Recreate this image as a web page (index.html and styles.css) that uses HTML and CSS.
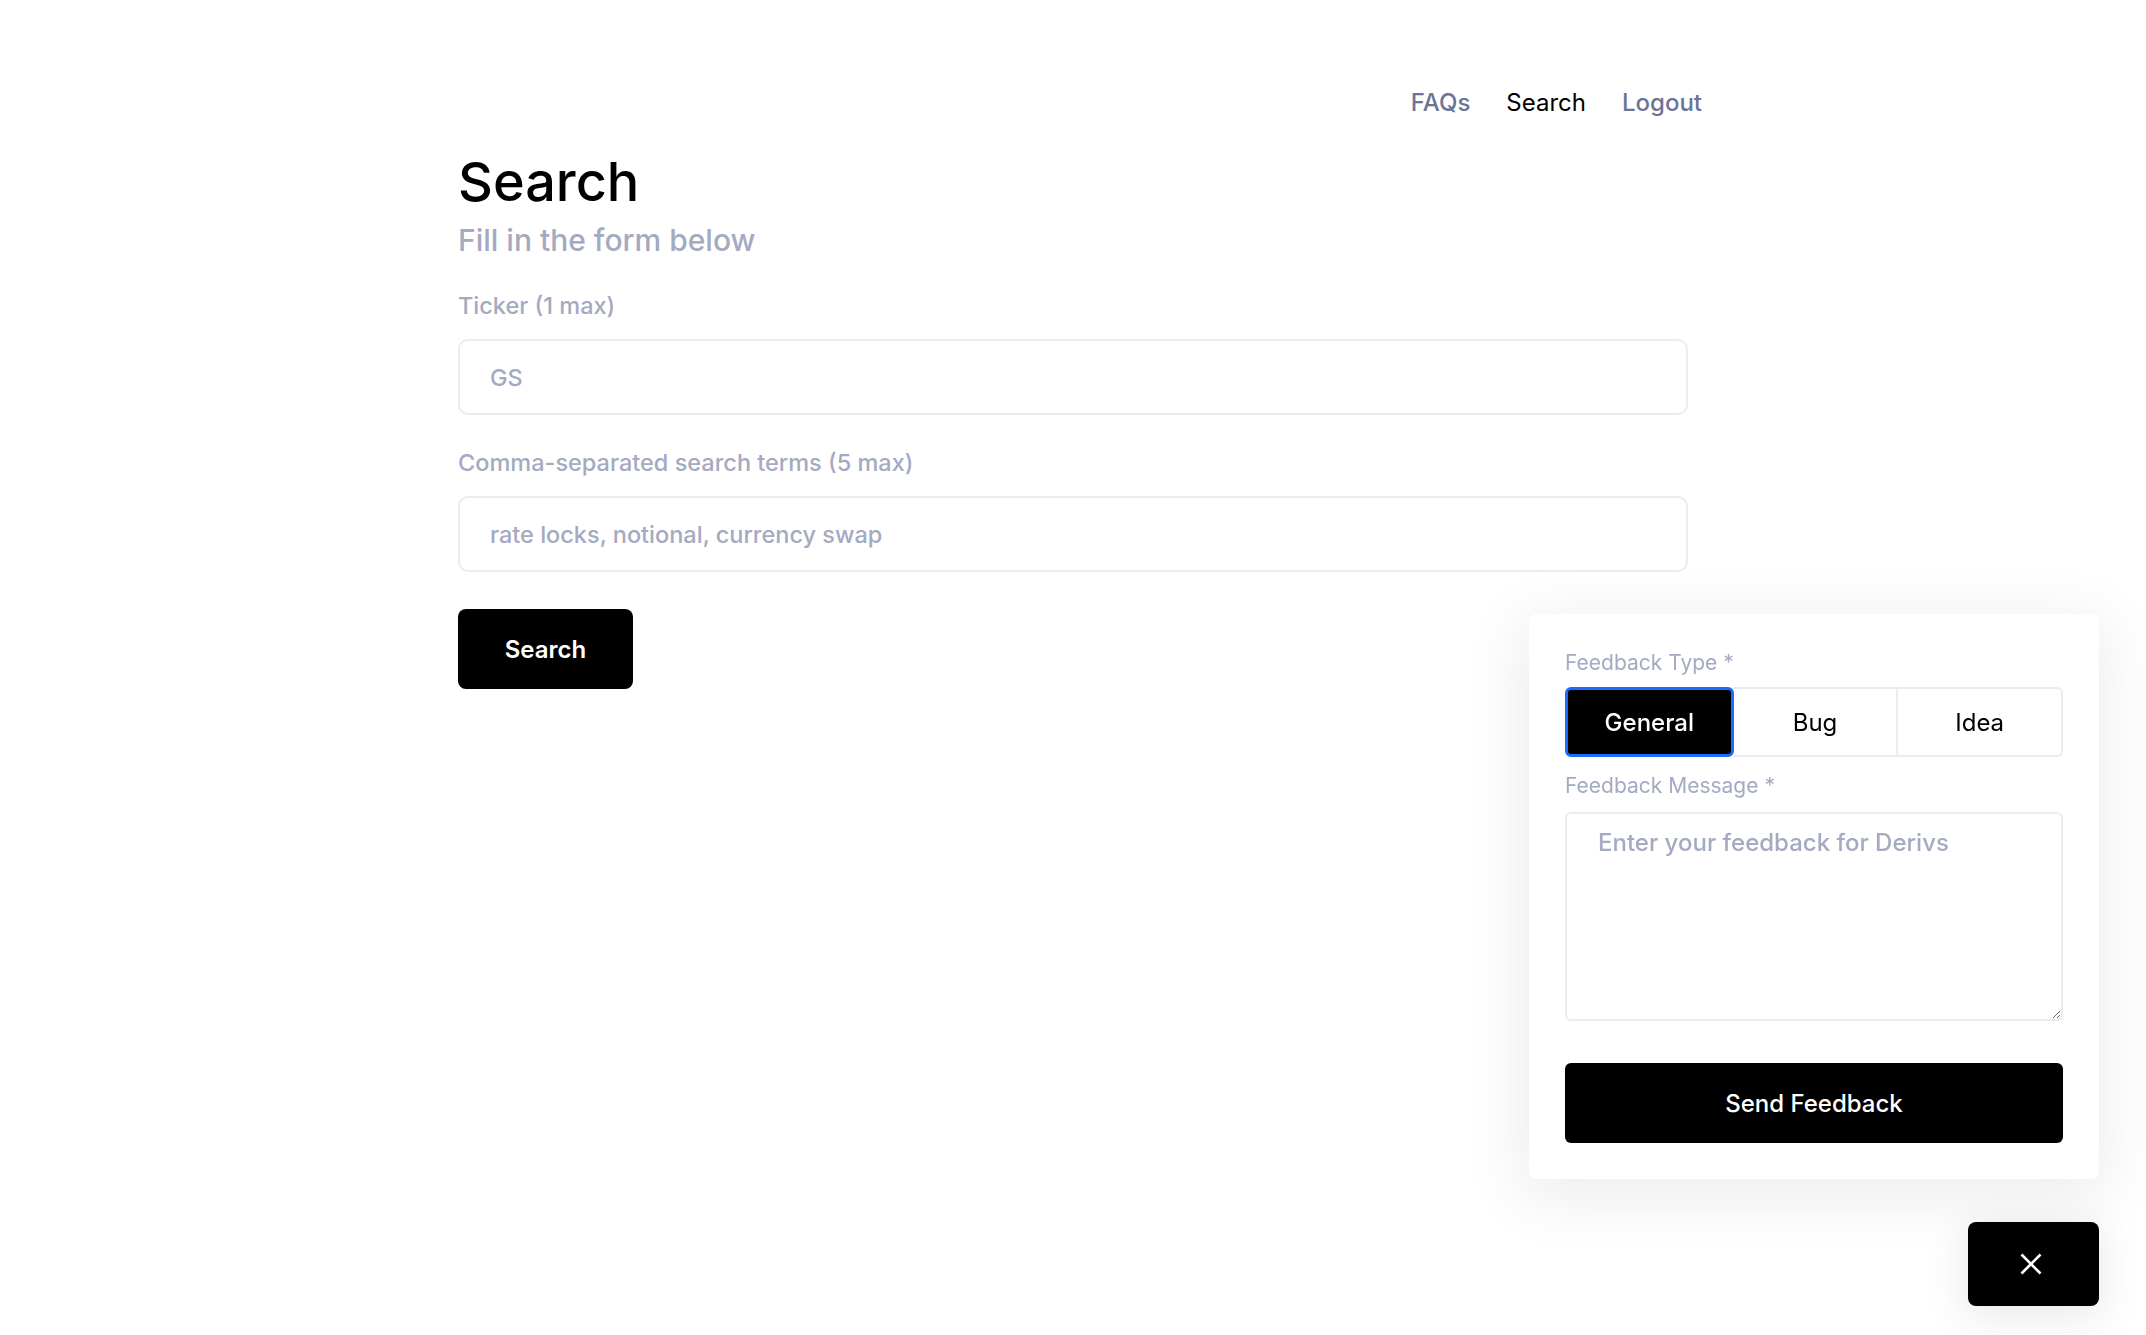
FILE: index.html
```html
<!DOCTYPE html>
<html lang="en">
<head>
    <meta charset="UTF-8">
    <meta name="viewport" content="width=device-width, initial-scale=1.0">
    <title>Search</title>
    <link rel="stylesheet" href="styles.css">
</head>
<body>
    <div class="container">
        <nav class="nav">
            <a href="#" class="nav-link">FAQs</a>
            <a href="#" class="nav-link active">Search</a>
            <a href="#" class="nav-link">Logout</a>
        </nav>

        <h1 class="title">Search</h1>
        <p class="subtitle">Fill in the form below</p>

        <form class="search-form">
            <label for="ticker">Ticker (1 max)</label>
            <input type="text" id="ticker" placeholder="GS">

            <label for="terms">Comma-separated search terms (5 max)</label>
            <input type="text" id="terms" placeholder="rate locks, notional, currency swap">

            <button type="button" class="search-btn">Search</button>
        </form>
    </div>

    <div class="feedback">
        <div class="feedback-panel">
            <div class="fb-label">Feedback Type *</div>
            <div class="segments">
                <button type="button" class="segment selected">General</button>
                <button type="button" class="segment">Bug</button>
                <button type="button" class="segment">Idea</button>
            </div>
            <div class="fb-label fb-label-msg">Feedback Message *</div>
            <textarea class="fb-text" placeholder="Enter your feedback for Derivs"></textarea>
            <button type="button" class="send-btn">Send Feedback</button>
        </div>
        <button type="button" class="close-btn" aria-label="Close">
            <svg width="22" height="22" viewBox="0 0 22 22">
                <path d="M1.5 1.5 L20.5 20.5 M20.5 1.5 L1.5 20.5" stroke="#fff" stroke-width="2.6" fill="none"/>
            </svg>
        </button>
    </div>
</body>
</html>
```

FILE: styles.css
```css
body {
    font-family: Inter, "Noto Sans", sans-serif;
    margin: 0;
    color: #000;
    background: #fff;
}
.container {
    width: 1230px;
    margin: 0 auto;
    padding-top: 87px;
}
.nav {
    display: flex;
    justify-content: flex-end;
    gap: 36px;
    margin-right: -14px;
}
.nav-link {
    font-size: 24px;
    line-height: 32px;
    font-weight: 500;
    color: #6b7496;
    text-decoration: none;
}
.nav-link.active {
    color: #000;
    font-weight: 400;
}
.title {
    font-size: 54px;
    line-height: 64px;
    font-weight: 500;
    margin: 31px 0 0;
}
.subtitle {
    font-size: 30px;
    line-height: 40px;
    font-weight: 500;
    color: #a4aac1;
    margin: 6px 0 0;
}
.search-form {
    display: flex;
    flex-direction: column;
    align-items: flex-start;
    margin-top: 30px;
}
.search-form label {
    font-size: 23.5px;
    line-height: 32px;
    font-weight: 500;
    color: #a4aac1;
}
.search-form input {
    box-sizing: border-box;
    width: 100%;
    height: 76px;
    margin: 17px 0 32px;
    padding: 0 30px;
    border: 2px solid #ebebf2;
    border-radius: 10px;
    font-family: inherit;
    font-size: 23.5px;
    font-weight: 500;
    outline: none;
}
.search-form input::placeholder {
    color: #a4aac1;
}
.search-form input:last-of-type {
    margin-bottom: 37px;
}
.search-btn {
    width: 175px;
    height: 80px;
    background: #000;
    color: #fff;
    border: none;
    border-radius: 8px;
    font-family: inherit;
    font-size: 24px;
    font-weight: 600;
    cursor: pointer;
}

/* feedback widget */
.feedback {
    position: fixed;
    right: 47px;
    bottom: 29px;
    display: flex;
    flex-direction: column;
    align-items: flex-end;
    gap: 43px;
}
.feedback-panel {
    box-sizing: border-box;
    width: 570px;
    padding: 35px 36px 36px;
    background: #fff;
    border-radius: 8px;
    box-shadow: 0 12px 60px 10px rgba(0, 0, 0, 0.07);
    display: flex;
    flex-direction: column;
}
.fb-label {
    font-size: 21px;
    line-height: 28px;
    color: #a4aac1;
}
.fb-label-msg {
    margin-top: 15px;
}
.segments {
    display: flex;
    margin-top: 10px;
    height: 70px;
}
.segment {
    flex: 1;
    background: #fff;
    color: #000;
    border: 2px solid #ebebf2;
    border-left-width: 0;
    font-family: inherit;
    font-size: 24px;
    font-weight: 400;
    cursor: pointer;
}
.segment:last-child {
    border-radius: 0 6px 6px 0;
}
.segment.selected {
    background: #000;
    color: #fff;
    font-weight: 500;
    border: 3px solid #1a6bff;
    border-radius: 6px;
}
.fb-text {
    box-sizing: border-box;
    height: 209px;
    margin-top: 12px;
    padding: 14px 31px;
    border: 2px solid #ebebf2;
    border-radius: 6px;
    font-family: inherit;
    font-size: 24px;
    font-weight: 500;
    outline: none;
}
.fb-text::placeholder {
    color: #a4aac1;
}
.send-btn {
    height: 80px;
    margin-top: 42px;
    background: #000;
    color: #fff;
    border: none;
    border-radius: 6px;
    font-family: inherit;
    font-size: 24px;
    font-weight: 500;
    cursor: pointer;
}
.close-btn {
    width: 131px;
    height: 84px;
    padding: 0 5px 0 0;
    background: #000;
    border: none;
    border-radius: 8px;
    box-shadow: 0 8px 40px 6px rgba(0, 0, 0, 0.08);
    display: flex;
    align-items: center;
    justify-content: center;
    cursor: pointer;
}
```
